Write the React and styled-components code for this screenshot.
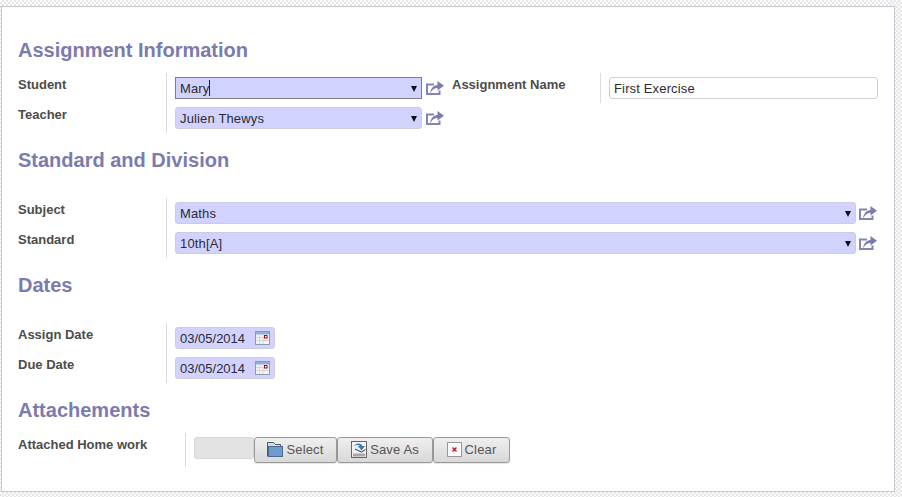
import React from "react";
import styled, { createGlobalStyle } from "styled-components";

const Global = createGlobalStyle`
  html, body { margin: 0; padding: 0; height: 100%; overflow: hidden; }
  body {
    font-family: "Liberation Sans", Arial, sans-serif;
    background-color: #fff;
    background-image: conic-gradient(#e6e6e6 25%, #fbfbfb 0 50%, #e6e6e6 0 75%, #fbfbfb 0);
    background-size: 4px 4px;
  }
`;

const Sheet = styled.div`
  box-sizing: border-box;
  width: 894px;
  height: 486px;
  margin: 6px 0 0 1px;
  padding: 30px 16px 0;
  background: #fff;
  border: 1px solid #c8c8d0;
`;

const Heading = styled.h2`
  margin: ${(p) => p.$top || 0}px 0 ${(p) => p.$bottom}px;
  height: 26px;
  font-size: 20px;
  line-height: 26px;
  font-weight: bold;
  color: #7c7bad;
`;

const Row = styled.div`
  display: flex;
  height: 30px;
`;

const Label = styled.div`
  box-sizing: border-box;
  width: ${(p) => p.$width || 148}px;
  flex: none;
  padding-top: 4px;
  font-size: 13px;
  line-height: 15px;
  font-weight: bold;
  color: #4c4c4c;
`;

const Cell = styled.div`
  display: flex;
  align-items: flex-start;
  flex: ${(p) => (p.$grow ? 1 : "none")};
  box-sizing: border-box;
  height: ${(p) => p.$height || 30}px;
  padding: 4px 0 0 8px;
  border-left: 1px solid #dcdcdc;
`;

const Field = styled.div`
  position: relative;
  box-sizing: border-box;
  display: flex;
  align-items: center;
  width: ${(p) => p.$width}px;
  height: 22px;
  padding-left: 4px;
  background: ${(p) => (p.$plain ? "#fff" : "#d2d2ff")};
  border: 1px solid ${(p) => (p.$focus ? "#7b7b8a" : p.$plain ? "#cfcfcf" : "#ccccdd")};
  border-radius: ${(p) => (p.$focus ? 0 : 3)}px;
  font-size: 13px;
  letter-spacing: ${(p) => (p.$date ? 0 : 0.15)}px;
  color: #2b2b33;
  white-space: nowrap;
`;

const TextCursor = styled.span`
  display: inline-block;
  width: 1px;
  height: 16px;
  margin-left: -1px;
  background: #222;
`;

const Caret = styled.span`
  position: absolute;
  right: 4px;
  top: 8px;
  border-style: solid;
  border-width: 6px 3px 0;
  border-color: #111 transparent transparent;
`;

const CalendarSlot = styled.span`
  position: absolute;
  right: 4px;
  top: 3px;
  display: flex;
`;

const ShareLink = styled.span`
  display: flex;
  flex: none;
  margin: 0 0 0 ${(p) => p.$left}px;
`;

const Spaced = styled.div`
  width: 8px;
`;

const FileName = styled.div`
  box-sizing: border-box;
  width: 60px;
  height: 22px;
  background: #e3e3e3;
  border: 1px solid #d6d6d6;
  border-radius: 3px;
`;

const Button = styled.button`
  box-sizing: border-box;
  display: flex;
  align-items: center;
  justify-content: center;
  gap: 3px;
  width: ${(p) => p.$width}px;
  height: 26px;
  padding: 0 0 2px;
  background: linear-gradient(#efefef, #d8d8d8);
  border: 1px solid #999;
  border-radius: 3px;
  box-shadow: 0 1px 1px rgba(0, 0, 0, 0.1);
  font-family: inherit;
  font-size: 13px;
  letter-spacing: 0.15px;
  color: #555;
`;

const ShareIcon = () => (
  <svg width="18" height="18" viewBox="0 0 18 18">
    <path d="M8 7.5H1V17H13.5V13.5" fill="none" stroke="#8584b6" strokeWidth="2" />
    <path d="M4 16.5C4.5 11.5 7.5 8.5 11.5 8V4L18 8.8 11.5 13.5V10.8C8.5 10.8 6 13 4 16.5Z" fill="#7c7bad" />
  </svg>
);

const CalendarIcon = () => (
  <svg width="15" height="14" viewBox="0 0 15 14">
    <rect x="0.5" y="0.5" width="14" height="13" fill="#f4f4f0" stroke="#8a9bb0" />
    <rect x="1" y="1" width="13" height="2.5" fill="#8fb0d8" />
    <path d="M1 6.5h13M1 9.5h13M4.5 4v9M8 4v9" stroke="#d5d5d5" />
    <rect x="9.5" y="4.5" width="2.5" height="2.5" fill="#fff" stroke="#8b1020" />
  </svg>
);

const FolderIcon = () => (
  <svg width="16" height="16" viewBox="0 0 16 16">
    <path d="M.5 15.5V1.5h6l2 2h5v2" fill="#d4dce6" stroke="#4d5b6b" />
    <rect x="1.5" y="5.5" width="14" height="10" fill="#6f9bd0" stroke="#4d6a8e" />
  </svg>
);

const SaveIcon = () => (
  <svg width="16" height="17" viewBox="0 0 16 17">
    <rect x=".5" y=".5" width="15" height="16" fill="#f2f2f2" stroke="#666" />
    <rect x="2" y="12.5" width="12" height="3" fill="#a8a8a8" />
    <path d="M3 5C5 1.5 10 1.5 11.5 5H14L10.5 9.5 7 5H9C8 3.5 5.5 3.5 3 5Z" fill="#3e78a8" />
    <path d="M4 8l6.5 3 4-2.5" fill="none" stroke="#333" />
  </svg>
);

const ClearIcon = () => (
  <svg width="15" height="15" viewBox="0 0 15 15">
    <rect x=".5" y=".5" width="14" height="14" fill="#fafafa" stroke="#999" />
    <path d="M5.5 5.5l4 4M9.5 5.5l-4 4" stroke="#c01818" strokeWidth="1.4" />
  </svg>
);

function Select({ width, focus, children }) {
  return (
    <Field $width={width} $focus={focus}>
      {children}
      <Caret />
    </Field>
  );
}

function DateField({ value }) {
  return (
    <Field $width={100} $date>
      {value}
      <CalendarSlot>
        <CalendarIcon />
      </CalendarSlot>
    </Field>
  );
}

function App() {
  return (
    <>
      <Global />
      <Sheet>
        <Heading $bottom={10}>Assignment Information</Heading>
        <Row>
          <Label>Student</Label>
          <Cell>
            <Select width={247} focus>
              Mary
              <TextCursor />
            </Select>
            <ShareLink $left={4}>
              <ShareIcon />
            </ShareLink>
            <Spaced />
          </Cell>
          <Label>Assignment Name</Label>
          <Cell $grow>
            <Field $width={269} $plain>
              First Exercise
            </Field>
          </Cell>
        </Row>
        <Row>
          <Label>Teacher</Label>
          <Cell>
            <Select width={247}>Julien Thewys</Select>
            <ShareLink $left={4}>
              <ShareIcon />
            </ShareLink>
          </Cell>
        </Row>

        <Heading $top={14} $bottom={25}>
          Standard and Division
        </Heading>
        <Row>
          <Label>Subject</Label>
          <Cell $grow>
            <Select width={681}>Maths</Select>
            <ShareLink $left={3}>
              <ShareIcon />
            </ShareLink>
          </Cell>
        </Row>
        <Row>
          <Label>Standard</Label>
          <Cell $grow>
            <Select width={681}>10th[A]</Select>
            <ShareLink $left={3}>
              <ShareIcon />
            </ShareLink>
          </Cell>
        </Row>

        <Heading $top={14} $bottom={25}>
          Dates
        </Heading>
        <Row>
          <Label>Assign Date</Label>
          <Cell>
            <DateField value="03/05/2014" />
          </Cell>
        </Row>
        <Row>
          <Label>Due Date</Label>
          <Cell>
            <DateField value="03/05/2014" />
          </Cell>
        </Row>

        <Heading $top={14} $bottom={10}>
          Attachements
        </Heading>
        <Row>
          <Label $width={167}>Attached Home work</Label>
          <Cell $height={34}>
            <FileName />
            <Button $width={83}>
              <FolderIcon />
              Select
            </Button>
            <Button $width={96}>
              <SaveIcon />
              Save As
            </Button>
            <Button $width={77}>
              <ClearIcon />
              Clear
            </Button>
          </Cell>
        </Row>
      </Sheet>
    </>
  );
}

export default App;
